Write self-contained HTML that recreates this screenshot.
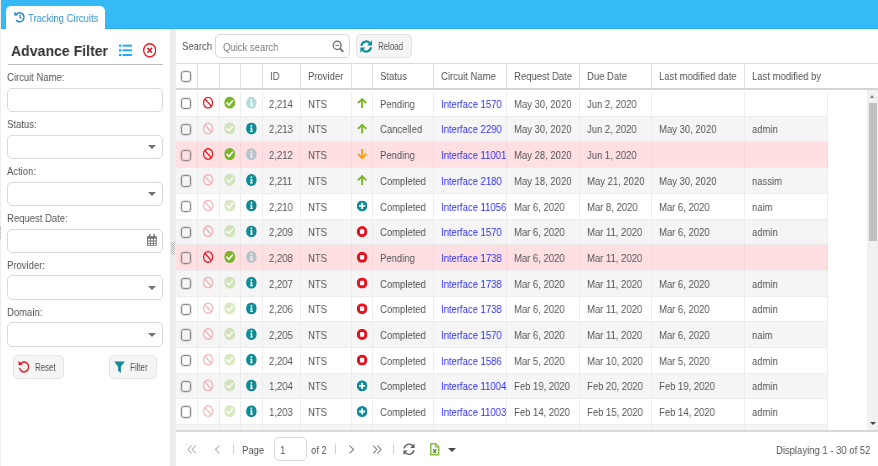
<!DOCTYPE html>
<html><head><meta charset="utf-8"><title>Tracking Circuits</title>
<style>
*{box-sizing:border-box;margin:0;padding:0}
html,body{width:878px;height:466px;overflow:hidden;background:#fff;font-family:"Liberation Sans",Arial,sans-serif;font-size:11.3px;color:#555}
.abs{position:absolute}
.t{will-change:transform;display:inline-block;transform:scaleX(.84);transform-origin:0 50%;white-space:nowrap}
#top{left:1px;top:0;width:877px;height:29.3px;background:#35baf6;border-bottom:1.3px solid #2aaeef}
#tab{left:6px;top:5.7px;width:99px;height:24px;background:#fff;border-radius:5px 5px 0 0;color:#3391c8;font-size:11.3px;line-height:25px;padding-left:22px;white-space:nowrap;}
#left{left:0;top:29px;width:170px;height:437px;background:#fff}
#split{left:170px;top:29px;width:6px;height:437px;background:#ececec}
#title{left:10.6px;top:41px;font-size:15.4px;font-weight:bold;color:#333;line-height:20px;white-space:nowrap}
#hr{left:8px;top:64px;width:155px;height:1px;background:#bdbdbd}
.lbl{left:7.2px;font-size:11.3px;line-height:14px;color:#555;white-space:nowrap}
.inp{left:7.3px;width:155.4px;height:24px;border:1px solid #d9d9d9;border-radius:5px;background:#fff}
.caret{position:absolute;right:6.2px;top:9.6px;width:0;height:0;border-left:4px solid transparent;border-right:4px solid transparent;border-top:4.4px solid #707070}
.btn{height:24px;border:1px solid #e4e4e4;border-radius:5px;background:#f5f5f5;font-size:10px;line-height:23px;color:#555;white-space:nowrap}
#grid{left:176px;top:29px;width:702px;height:437px;background:#fff}
#hdr{left:176px;top:63px;width:702px;height:27px;border-top:1px solid #dadada;border-bottom:2px solid #d4d4d4;background:#fff}
.h{position:absolute;top:0;height:24px;line-height:25px;border-right:1px solid #dedede;padding-left:7.1px;white-space:nowrap;font-size:11.3px;color:#555}
#body{left:176px;top:91.1px;width:691px;height:338.9px;overflow:hidden}
.row{position:relative;height:25.7px;width:652px;background:#fff;border-bottom:1px solid #ededed}
.row.alt{background:#f5f5f5}
.row.pink{background:#ffe0e2}
.c{position:absolute;top:0;height:25.7px;line-height:26.2px;border-right:1px solid #ededed;padding-left:7.1px;white-space:nowrap;overflow:hidden}
.row.pink .c{border-right-color:#f5d5d7}
.c0{left:0;width:21.5px}.c1{left:21.5px;width:22px}.c2{left:43.5px;width:21.5px}.c3{left:65px;width:21.5px}
.c4{left:86.5px;width:38px}.c5{left:124.5px;width:51px}.c6{left:175.5px;width:21px}.c7{left:196.5px;width:61px}
.c8{left:257.5px;width:73px}.c9{left:330.5px;width:73px}.c10{left:403.5px;width:72px}.c11{left:475.5px;width:93px}.c12{left:568.5px;width:83px}
.c1,.c2,.c3,.c6{padding-left:0}.c4{padding-left:6.6px}
.c a{color:#3030f6}
.cb{position:absolute;left:4.8px;top:7.1px;width:10px;height:11px;border:1px solid #8a8a8a;border-radius:2.8px;background:transparent;box-shadow:0 0 0 .5px rgba(130,130,130,.45),inset 0 0 0 .5px rgba(130,130,130,.3);height:11.3px}
.ic{position:absolute;left:5px;top:5.55px;width:10.8px;height:12.2px;overflow:visible}
.ic.s{left:5.3px;top:6.5px;width:10.6px;height:11px}
.ic.a{left:5.6px;top:6.5px;width:9.8px;height:10.5px}
.btn .t{transform:scaleX(.79)}
.c .t{position:relative;top:-0.35px}
.h .t{position:relative;top:0px}
.fade{opacity:.3}
#sb{left:867px;top:90px;width:11px;height:340px;background:#f1f1f1}
#thumb{left:869px;top:103px;width:8px;height:137.5px;background:#c1c1c1}
#pager{left:176px;top:430px;width:702px;height:36px;border-top:2px solid #d8d8d8;background:#fff}
.pt{top:442px;line-height:16px;font-size:11.3px;color:#555;white-space:nowrap}
.sep{top:444px;width:1px;height:10px;background:#d0d0d0}
</style></head><body>
<svg width="0" height="0" style="position:absolute">
<defs>
<symbol preserveAspectRatio="none" id="i-ban" viewBox="0 0 12 12"><circle cx="6" cy="6" r="5.2" fill="none" stroke="#e8151f" stroke-width="1.4"/><line x1="2.4" y1="2.4" x2="9.6" y2="9.6" stroke="#e8151f" stroke-width="1.4"/></symbol>
<symbol preserveAspectRatio="none" id="i-check" viewBox="0 0 12 12"><circle cx="6" cy="6" r="6" fill="#7cb52a"/><path d="M3 6.3 L5.2 8.3 L9 4.2" fill="none" stroke="#fff" stroke-width="1.7" stroke-linecap="round" stroke-linejoin="round"/></symbol>
<symbol preserveAspectRatio="none" id="i-info" viewBox="0 0 12 12"><circle cx="6" cy="6" r="6" fill="#0d8b96"/><circle cx="6" cy="3.2" r="1.05" fill="#fff"/><path d="M4.7 5 H7 V8.5 H7.6 V9.5 H4.5 V8.5 H5.2 V5.9 H4.7 Z" fill="#fff"/></symbol>
<symbol preserveAspectRatio="none" id="i-up" viewBox="0 0 10 10.5"><path d="M5 10.5 V1.6 M0.8 5.6 L5 1.4 L9.2 5.6" fill="none" stroke="#7cb52a" stroke-width="1.9"/></symbol>
<symbol preserveAspectRatio="none" id="i-down" viewBox="0 0 10 10.5"><path d="M5 0 V8.9 M0.8 4.9 L5 9.1 L9.2 4.9" fill="none" stroke="#fb9c12" stroke-width="1.9"/></symbol>
<symbol preserveAspectRatio="none" id="i-plus" viewBox="0 0 12 12"><circle cx="6" cy="6" r="6" fill="#0d8b96"/><path d="M6 2.6 V9.4 M2.6 6 H9.4" stroke="#fff" stroke-width="2" fill="none"/></symbol>
<symbol preserveAspectRatio="none" id="i-stop" viewBox="0 0 12 12"><circle cx="6" cy="6" r="6" fill="#e8101c"/><rect x="3.6" y="3.5" width="4.8" height="5" rx="1.1" fill="#fff"/></symbol>
</defs></svg>

<div id="top" class="abs"></div>
<div id="tab" class="abs"><span class="t">Tracking Circuits</span></div>
<svg class="abs" style="left:13.8px;top:11.4px" width="11.4" height="11.8" viewBox="0 0 12 12" preserveAspectRatio="none"><path d="M2.5 3.3 A4.6 4.6 0 1 1 2.2 9.1" fill="none" stroke="#2488bf" stroke-width="1.5"/><path d="M0.2 0.6 L0.5 4.9 L4.6 4.2 Z" fill="#2488bf"/><path d="M6.3 3.4 V6.4 L8 7.7" fill="none" stroke="#2488bf" stroke-width="1.3"/></svg>

<div id="left" class="abs"></div>
<div id="split" class="abs"></div>
<div id="title" class="abs"><span class="t" style="transform:scaleX(.915)">Advance Filter</span></div>
<svg class="abs" style="left:118.6px;top:44px" width="13.8" height="12.6" viewBox="0 0 13.8 12.6"><g fill="#22a9f4"><rect x="0" y="0.5" width="2.3" height="2.3"/><rect x="0" y="5.15" width="2.3" height="2.3"/><rect x="0" y="9.8" width="2.3" height="2.3"/><rect x="3.5" y="0.65" width="10.3" height="2"/><rect x="3.5" y="5.3" width="10.3" height="2"/><rect x="3.5" y="9.95" width="10.3" height="2"/></g></svg>
<svg class="abs" style="left:142.6px;top:42.9px" width="13.4" height="14.7" viewBox="0 0 14 14" preserveAspectRatio="none"><circle cx="7" cy="7" r="6.3" fill="none" stroke="#e8151f" stroke-width="1.35"/><path d="M4.6 4.7 L9.4 9.3 M9.4 4.7 L4.6 9.3" stroke="#e8151f" stroke-width="1.55" fill="none"/></svg>
<div id="hr" class="abs"></div>
<div class="abs" style="left:0;top:0;width:1px;height:466px;background:#eee"></div>
<div class="abs" style="left:0;top:227px;width:1px;height:12px;border-left:1px dotted #b0b0b0"></div>
<div class="abs" style="left:171px;top:242px;width:4px;height:13px;background-image:linear-gradient(45deg,#b8b8b8 25%,transparent 25%,transparent 75%,#b8b8b8 75%),linear-gradient(45deg,#b8b8b8 25%,transparent 25%,transparent 75%,#b8b8b8 75%);background-size:2px 2px;background-position:0 0,1px 1px"></div>

<div class="abs lbl" style="top:70px"><span class="t">Circuit Name:</span></div>
<div class="abs inp" style="top:87.7px"></div>
<div class="abs lbl" style="top:117px"><span class="t">Status:</span></div>
<div class="abs inp" style="top:134.7px"><span class="caret"></span></div>
<div class="abs lbl" style="top:164px"><span class="t">Action:</span></div>
<div class="abs inp" style="top:181.7px"><span class="caret"></span></div>
<div class="abs lbl" style="top:211px"><span class="t">Request Date:</span></div>
<div class="abs inp" style="top:228.7px"><svg style="position:absolute;right:5.2px;top:4.8px" width="9.8" height="11.8" viewBox="0 0 10 11" preserveAspectRatio="none"><path d="M0 2 H10 V11 H0 Z" fill="#777"/><rect x="2" y="0" width="1.5" height="3" fill="#777"/><rect x="6.5" y="0" width="1.5" height="3" fill="#777"/><g fill="#fff"><rect x="1" y="4.5" width="2" height="1.5"/><rect x="4" y="4.5" width="2" height="1.5"/><rect x="7" y="4.5" width="2" height="1.5"/><rect x="1" y="7" width="2" height="1.5"/><rect x="4" y="7" width="2" height="1.5"/><rect x="7" y="7" width="2" height="1.5"/><rect x="1" y="9.3" width="2" height="1"/><rect x="4" y="9.3" width="2" height="1"/><rect x="7" y="9.3" width="2" height="1"/></g></svg></div>
<div class="abs lbl" style="top:258px"><span class="t">Provider:</span></div>
<div class="abs inp" style="top:275.4px;height:24.3px"><span class="caret"></span></div>
<div class="abs lbl" style="top:304.5px"><span class="t">Domain:</span></div>
<div class="abs inp" style="top:322.3px;height:24.3px"><span class="caret"></span></div>

<div class="abs btn" style="left:13px;top:355px;width:51px;padding-left:20.8px"><span class="t">Reset</span></div>
<svg class="abs" style="left:17.8px;top:360.3px" width="11.6" height="12.6" viewBox="0 0 12 12" preserveAspectRatio="none"><path d="M2.9 3.3 A4.7 4.7 0 1 1 1.6 7.4" fill="none" stroke="#e8151f" stroke-width="1.45"/><path d="M0.5 0.6 L0.7 5.1 L5 4.6 Z" fill="#e8151f"/></svg>
<div class="abs btn" style="left:108.6px;top:355px;width:48.6px;padding-left:20.6px"><span class="t">Filter</span></div>
<svg class="abs" style="left:114px;top:360.5px" width="11" height="12.3" viewBox="0 0 12 12" preserveAspectRatio="none"><path d="M0.2 0.4 H11.8 L7.5 5.6 V11.7 L4.5 9.4 V5.6 Z" fill="#0d8b96"/></svg>

<div id="grid" class="abs"></div>
<div class="abs" style="left:182px;top:39px;line-height:14px;font-size:11.3px"><span class="t">Search</span></div>
<div class="abs inp" style="left:215px;top:34px;width:135px;height:24px;padding-left:7px;line-height:24.6px;color:#7a7a7a;font-size:11.3px"><span class="t">Quick search</span>
<svg style="position:absolute;right:4.6px;top:4.6px" width="12.4" height="13" viewBox="0 0 12 12" preserveAspectRatio="none"><circle cx="5" cy="5" r="3.8" fill="none" stroke="#777" stroke-width="1.4"/><path d="M7.8 7.8 L11 11" stroke="#777" stroke-width="1.8"/><path d="M3.3 5 H6.7" stroke="#777" stroke-width="1"/></svg></div>
<div class="abs btn" style="left:356px;top:34px;width:56px;padding-left:21px"><span class="t">Reload</span></div>
<svg class="abs" style="left:360.4px;top:39.6px" width="12.4" height="13" viewBox="0 0 12 12" preserveAspectRatio="none"><path d="M1.3 5.3 A4.8 4.8 0 0 1 9.4 2.7" fill="none" stroke="#0d8b96" stroke-width="2"/><path d="M11.6 0.3 V5 H6.9 Z" fill="#0d8b96"/><path d="M10.7 6.7 A4.8 4.8 0 0 1 2.6 9.3" fill="none" stroke="#0d8b96" stroke-width="2"/><path d="M0.4 11.7 V7 H5.1 Z" fill="#0d8b96"/></svg>

<div id="hdr" class="abs">
<div class="h" style="left:0;width:21.5px"><span class="cb" style="top:7px"></span></div>
<div class="h" style="left:21.5px;width:22px"></div>
<div class="h" style="left:43.5px;width:21.5px"></div>
<div class="h" style="left:65px;width:21.5px"></div>
<div class="h" style="left:86.5px;width:38px"><span class="t">ID</span></div>
<div class="h" style="left:124.5px;width:51px"><span class="t">Provider</span></div>
<div class="h" style="left:175.5px;width:21px"></div>
<div class="h" style="left:196.5px;width:61px"><span class="t">Status</span></div>
<div class="h" style="left:257.5px;width:73px"><span class="t">Circuit Name</span></div>
<div class="h" style="left:330.5px;width:73px"><span class="t">Request Date</span></div>
<div class="h" style="left:403.5px;width:72px"><span class="t">Due Date</span></div>
<div class="h" style="left:475.5px;width:93px"><span class="t">Last modified date</span></div>
<div class="h" style="left:568.5px;width:130px;border-right:0"><span class="t">Last modified by</span></div>
</div>
<div id="body" class="abs">
<div class="row "><div class="c c0"><span class="cb"></span></div><div class="c c1"></div><div class="c c2"></div><div class="c c3"></div><div class="c c4"><span class="t">2,214</span></div><div class="c c5"><span class="t">NTS</span></div><div class="c c6"></div><div class="c c7"><span class="t">Pending</span></div><div class="c c8"><a class="t">Interface 1570</a></div><div class="c c9"><span class="t">May 30, 2020</span></div><div class="c c10"><span class="t">Jun 2, 2020</span></div><div class="c c11"></div><div class="c c12"></div></div>
<div class="row alt"><div class="c c0"><span class="cb"></span></div><div class="c c1"></div><div class="c c2"></div><div class="c c3"></div><div class="c c4"><span class="t">2,213</span></div><div class="c c5"><span class="t">NTS</span></div><div class="c c6"></div><div class="c c7"><span class="t">Cancelled</span></div><div class="c c8"><a class="t">Interface 2290</a></div><div class="c c9"><span class="t">May 30, 2020</span></div><div class="c c10"><span class="t">Jun 2, 2020</span></div><div class="c c11"><span class="t">May 30, 2020</span></div><div class="c c12"><span class="t">admin</span></div></div>
<div class="row pink"><div class="c c0"><span class="cb"></span></div><div class="c c1"></div><div class="c c2"></div><div class="c c3"></div><div class="c c4"><span class="t">2,212</span></div><div class="c c5"><span class="t">NTS</span></div><div class="c c6"></div><div class="c c7"><span class="t">Pending</span></div><div class="c c8"><a class="t">Interface 11001</a></div><div class="c c9"><span class="t">May 28, 2020</span></div><div class="c c10"><span class="t">Jun 1, 2020</span></div><div class="c c11"></div><div class="c c12"></div></div>
<div class="row alt"><div class="c c0"><span class="cb"></span></div><div class="c c1"></div><div class="c c2"></div><div class="c c3"></div><div class="c c4"><span class="t">2,211</span></div><div class="c c5"><span class="t">NTS</span></div><div class="c c6"></div><div class="c c7"><span class="t">Completed</span></div><div class="c c8"><a class="t">Interface 2180</a></div><div class="c c9"><span class="t">May 18, 2020</span></div><div class="c c10"><span class="t">May 21, 2020</span></div><div class="c c11"><span class="t">May 30, 2020</span></div><div class="c c12"><span class="t">nassim</span></div></div>
<div class="row "><div class="c c0"><span class="cb"></span></div><div class="c c1"></div><div class="c c2"></div><div class="c c3"></div><div class="c c4"><span class="t">2,210</span></div><div class="c c5"><span class="t">NTS</span></div><div class="c c6"></div><div class="c c7"><span class="t">Completed</span></div><div class="c c8"><a class="t">Interface 11056</a></div><div class="c c9"><span class="t">Mar 6, 2020</span></div><div class="c c10"><span class="t">Mar 8, 2020</span></div><div class="c c11"><span class="t">Mar 6, 2020</span></div><div class="c c12"><span class="t">naim</span></div></div>
<div class="row alt"><div class="c c0"><span class="cb"></span></div><div class="c c1"></div><div class="c c2"></div><div class="c c3"></div><div class="c c4"><span class="t">2,209</span></div><div class="c c5"><span class="t">NTS</span></div><div class="c c6"></div><div class="c c7"><span class="t">Completed</span></div><div class="c c8"><a class="t">Interface 1570</a></div><div class="c c9"><span class="t">Mar 6, 2020</span></div><div class="c c10"><span class="t">Mar 11, 2020</span></div><div class="c c11"><span class="t">Mar 6, 2020</span></div><div class="c c12"><span class="t">admin</span></div></div>
<div class="row pink"><div class="c c0"><span class="cb"></span></div><div class="c c1"></div><div class="c c2"></div><div class="c c3"></div><div class="c c4"><span class="t">2,208</span></div><div class="c c5"><span class="t">NTS</span></div><div class="c c6"></div><div class="c c7"><span class="t">Pending</span></div><div class="c c8"><a class="t">Interface 1738</a></div><div class="c c9"><span class="t">Mar 6, 2020</span></div><div class="c c10"><span class="t">Mar 11, 2020</span></div><div class="c c11"></div><div class="c c12"></div></div>
<div class="row alt"><div class="c c0"><span class="cb"></span></div><div class="c c1"></div><div class="c c2"></div><div class="c c3"></div><div class="c c4"><span class="t">2,207</span></div><div class="c c5"><span class="t">NTS</span></div><div class="c c6"></div><div class="c c7"><span class="t">Completed</span></div><div class="c c8"><a class="t">Interface 1738</a></div><div class="c c9"><span class="t">Mar 6, 2020</span></div><div class="c c10"><span class="t">Mar 11, 2020</span></div><div class="c c11"><span class="t">Mar 6, 2020</span></div><div class="c c12"><span class="t">admin</span></div></div>
<div class="row "><div class="c c0"><span class="cb"></span></div><div class="c c1"></div><div class="c c2"></div><div class="c c3"></div><div class="c c4"><span class="t">2,206</span></div><div class="c c5"><span class="t">NTS</span></div><div class="c c6"></div><div class="c c7"><span class="t">Completed</span></div><div class="c c8"><a class="t">Interface 1738</a></div><div class="c c9"><span class="t">Mar 6, 2020</span></div><div class="c c10"><span class="t">Mar 11, 2020</span></div><div class="c c11"><span class="t">Mar 6, 2020</span></div><div class="c c12"><span class="t">admin</span></div></div>
<div class="row alt"><div class="c c0"><span class="cb"></span></div><div class="c c1"></div><div class="c c2"></div><div class="c c3"></div><div class="c c4"><span class="t">2,205</span></div><div class="c c5"><span class="t">NTS</span></div><div class="c c6"></div><div class="c c7"><span class="t">Completed</span></div><div class="c c8"><a class="t">Interface 1570</a></div><div class="c c9"><span class="t">Mar 6, 2020</span></div><div class="c c10"><span class="t">Mar 11, 2020</span></div><div class="c c11"><span class="t">Mar 6, 2020</span></div><div class="c c12"><span class="t">naim</span></div></div>
<div class="row "><div class="c c0"><span class="cb"></span></div><div class="c c1"></div><div class="c c2"></div><div class="c c3"></div><div class="c c4"><span class="t">2,204</span></div><div class="c c5"><span class="t">NTS</span></div><div class="c c6"></div><div class="c c7"><span class="t">Completed</span></div><div class="c c8"><a class="t">Interface 1586</a></div><div class="c c9"><span class="t">Mar 5, 2020</span></div><div class="c c10"><span class="t">Mar 10, 2020</span></div><div class="c c11"><span class="t">Mar 5, 2020</span></div><div class="c c12"><span class="t">admin</span></div></div>
<div class="row alt"><div class="c c0"><span class="cb"></span></div><div class="c c1"></div><div class="c c2"></div><div class="c c3"></div><div class="c c4"><span class="t">1,204</span></div><div class="c c5"><span class="t">NTS</span></div><div class="c c6"></div><div class="c c7"><span class="t">Completed</span></div><div class="c c8"><a class="t">Interface 11004</a></div><div class="c c9"><span class="t">Feb 19, 2020</span></div><div class="c c10"><span class="t">Feb 20, 2020</span></div><div class="c c11"><span class="t">Feb 19, 2020</span></div><div class="c c12"><span class="t">admin</span></div></div>
<div class="row "><div class="c c0"><span class="cb"></span></div><div class="c c1"></div><div class="c c2"></div><div class="c c3"></div><div class="c c4"><span class="t">1,203</span></div><div class="c c5"><span class="t">NTS</span></div><div class="c c6"></div><div class="c c7"><span class="t">Completed</span></div><div class="c c8"><a class="t">Interface 11003</a></div><div class="c c9"><span class="t">Feb 14, 2020</span></div><div class="c c10"><span class="t">Feb 15, 2020</span></div><div class="c c11"><span class="t">Feb 14, 2020</span></div><div class="c c12"><span class="t">admin</span></div></div>
<div class="row alt"><div class="c c0"></div><div class="c c1"></div><div class="c c2"></div><div class="c c3"></div><div class="c c4"></div><div class="c c5"></div><div class="c c6"></div><div class="c c7"></div><div class="c c8"></div><div class="c c9"></div><div class="c c10"></div><div class="c c11"></div><div class="c c12"></div></div>
</div><svg class="abs" style="left:176px;top:91px" width="200" height="339" viewBox="0 0 200 339"><use href="#i-ban" x="26.85" y="5.60" width="10.50" height="12.20"/><use href="#i-check" x="48.20" y="5.60" width="11.00" height="12.20"/><use href="#i-info" x="70.05" y="5.90" width="10.70" height="11.90" opacity=".3"/><use href="#i-up" x="181.10" y="6.65" width="10.00" height="10.40"/><use href="#i-ban" x="26.85" y="31.30" width="10.50" height="12.20" opacity=".3"/><use href="#i-check" x="48.20" y="31.30" width="11.00" height="12.20" opacity=".3"/><use href="#i-info" x="70.05" y="31.60" width="10.70" height="11.90"/><use href="#i-up" x="181.10" y="32.35" width="10.00" height="10.40"/><use href="#i-ban" x="26.85" y="57.00" width="10.50" height="12.20"/><use href="#i-check" x="48.20" y="57.00" width="11.00" height="12.20"/><use href="#i-info" x="70.05" y="57.30" width="10.70" height="11.90" opacity=".3"/><use href="#i-down" x="181.10" y="58.05" width="10.00" height="10.40"/><use href="#i-ban" x="26.85" y="82.70" width="10.50" height="12.20" opacity=".3"/><use href="#i-check" x="48.20" y="82.70" width="11.00" height="12.20" opacity=".3"/><use href="#i-info" x="70.05" y="83.00" width="10.70" height="11.90"/><use href="#i-up" x="181.10" y="83.75" width="10.00" height="10.40"/><use href="#i-ban" x="26.85" y="108.40" width="10.50" height="12.20" opacity=".3"/><use href="#i-check" x="48.20" y="108.40" width="11.00" height="12.20" opacity=".3"/><use href="#i-info" x="70.05" y="108.70" width="10.70" height="11.90"/><use href="#i-plus" x="180.75" y="109.40" width="10.70" height="11.00"/><use href="#i-ban" x="26.85" y="134.10" width="10.50" height="12.20" opacity=".3"/><use href="#i-check" x="48.20" y="134.10" width="11.00" height="12.20" opacity=".3"/><use href="#i-info" x="70.05" y="134.40" width="10.70" height="11.90"/><use href="#i-stop" x="180.75" y="135.10" width="10.70" height="11.00"/><use href="#i-ban" x="26.85" y="159.80" width="10.50" height="12.20"/><use href="#i-check" x="48.20" y="159.80" width="11.00" height="12.20"/><use href="#i-info" x="70.05" y="160.10" width="10.70" height="11.90" opacity=".3"/><use href="#i-stop" x="180.75" y="160.80" width="10.70" height="11.00"/><use href="#i-ban" x="26.85" y="185.50" width="10.50" height="12.20" opacity=".3"/><use href="#i-check" x="48.20" y="185.50" width="11.00" height="12.20" opacity=".3"/><use href="#i-info" x="70.05" y="185.80" width="10.70" height="11.90"/><use href="#i-stop" x="180.75" y="186.50" width="10.70" height="11.00"/><use href="#i-ban" x="26.85" y="211.20" width="10.50" height="12.20" opacity=".3"/><use href="#i-check" x="48.20" y="211.20" width="11.00" height="12.20" opacity=".3"/><use href="#i-info" x="70.05" y="211.50" width="10.70" height="11.90"/><use href="#i-stop" x="180.75" y="212.20" width="10.70" height="11.00"/><use href="#i-ban" x="26.85" y="236.90" width="10.50" height="12.20" opacity=".3"/><use href="#i-check" x="48.20" y="236.90" width="11.00" height="12.20" opacity=".3"/><use href="#i-info" x="70.05" y="237.20" width="10.70" height="11.90"/><use href="#i-stop" x="180.75" y="237.90" width="10.70" height="11.00"/><use href="#i-ban" x="26.85" y="262.60" width="10.50" height="12.20" opacity=".3"/><use href="#i-check" x="48.20" y="262.60" width="11.00" height="12.20" opacity=".3"/><use href="#i-info" x="70.05" y="262.90" width="10.70" height="11.90"/><use href="#i-stop" x="180.75" y="263.60" width="10.70" height="11.00"/><use href="#i-ban" x="26.85" y="288.30" width="10.50" height="12.20" opacity=".3"/><use href="#i-check" x="48.20" y="288.30" width="11.00" height="12.20" opacity=".3"/><use href="#i-info" x="70.05" y="288.60" width="10.70" height="11.90"/><use href="#i-plus" x="180.75" y="289.30" width="10.70" height="11.00"/><use href="#i-ban" x="26.85" y="314.00" width="10.50" height="12.20" opacity=".3"/><use href="#i-check" x="48.20" y="314.00" width="11.00" height="12.20" opacity=".3"/><use href="#i-info" x="70.05" y="314.30" width="10.70" height="11.90"/><use href="#i-plus" x="180.75" y="315.00" width="10.70" height="11.00"/></svg><div>
</div>
<div id="sb" class="abs"></div>
<div id="thumb" class="abs"></div>
<div class="abs" style="left:870.3px;top:95px;width:0;height:0;border-left:2.9px solid transparent;border-right:2.9px solid transparent;border-bottom:3.3px solid #808080"></div>
<div class="abs" style="left:870.1px;top:421.5px;width:0;height:0;border-left:3.1px solid transparent;border-right:3.1px solid transparent;border-top:3.6px solid #404040"></div>

<div id="pager" class="abs"></div>
<svg class="abs" style="left:187px;top:445px" width="10" height="9" viewBox="0 0 10 9"><path d="M4.6 0.6 L1 4.5 L4.6 8.4 M8.8 0.6 L5.2 4.5 L8.8 8.4" fill="none" stroke="#b4b4b4" stroke-width="1.1"/></svg>
<svg class="abs" style="left:214px;top:445px" width="7" height="9" viewBox="0 0 7 9"><path d="M5.4 0.6 L1.4 4.5 L5.4 8.4" fill="none" stroke="#b4b4b4" stroke-width="1.1"/></svg>
<div class="abs sep" style="left:233px"></div>
<div class="abs pt" style="left:242px"><span class="t">Page</span></div>
<div class="abs inp" style="left:273.5px;top:437px;width:33.5px;height:24px;line-height:25px;padding-left:5.6px;font-size:11.3px"><span class="t">1</span></div>
<div class="abs pt" style="left:311px"><span class="t">of 2</span></div>
<div class="abs sep" style="left:335px"></div>
<svg class="abs" style="left:348px;top:445px" width="7" height="9" viewBox="0 0 7 9"><path d="M1.6 0.6 L5.6 4.5 L1.6 8.4" fill="none" stroke="#808080" stroke-width="1.1"/></svg>
<svg class="abs" style="left:372px;top:445px" width="10" height="9" viewBox="0 0 10 9"><path d="M1.2 0.6 L4.8 4.5 L1.2 8.4 M5.4 0.6 L9 4.5 L5.4 8.4" fill="none" stroke="#808080" stroke-width="1.1"/></svg>
<div class="abs sep" style="left:393px"></div>
<svg class="abs" style="left:403px;top:443px" width="12" height="12.5" viewBox="0 0 12 12.5" preserveAspectRatio="none"><path d="M1.1 5.4 A5 5 0 0 1 9.9 3" fill="none" stroke="#606060" stroke-width="1.4"/><path d="M11.6 0.5 V4.9 H7.2 Z" fill="#606060"/><path d="M10.9 7.1 A5 5 0 0 1 2.1 9.5" fill="none" stroke="#606060" stroke-width="1.4"/><path d="M0.4 12 V7.6 H4.8 Z" fill="#606060"/></svg>
<svg class="abs" style="left:430px;top:443px" width="9.5" height="12.5" viewBox="0 0 9.5 12.5"><path d="M0.8 0.8 H5.6 L8.7 3.9 V11.7 H0.8 Z" fill="#fff" stroke="#86be3a" stroke-width="1.5" stroke-linejoin="round"/><path d="M5.4 0.8 V4.1 H8.7" fill="none" stroke="#86be3a" stroke-width="1"/><path d="M3.2 6.2 L6.2 10.2 M6.2 6.2 L3.2 10.2" stroke="#4d7d1a" stroke-width="1.2"/></svg>
<div class="abs" style="left:447.5px;top:447.9px;width:0;height:0;border-left:4px solid transparent;border-right:4px solid transparent;border-top:4.2px solid #444"></div>
<div class="abs pt" style="left:776px"><span class="t">Displaying 1 - 30 of 52</span></div>
</body></html>
